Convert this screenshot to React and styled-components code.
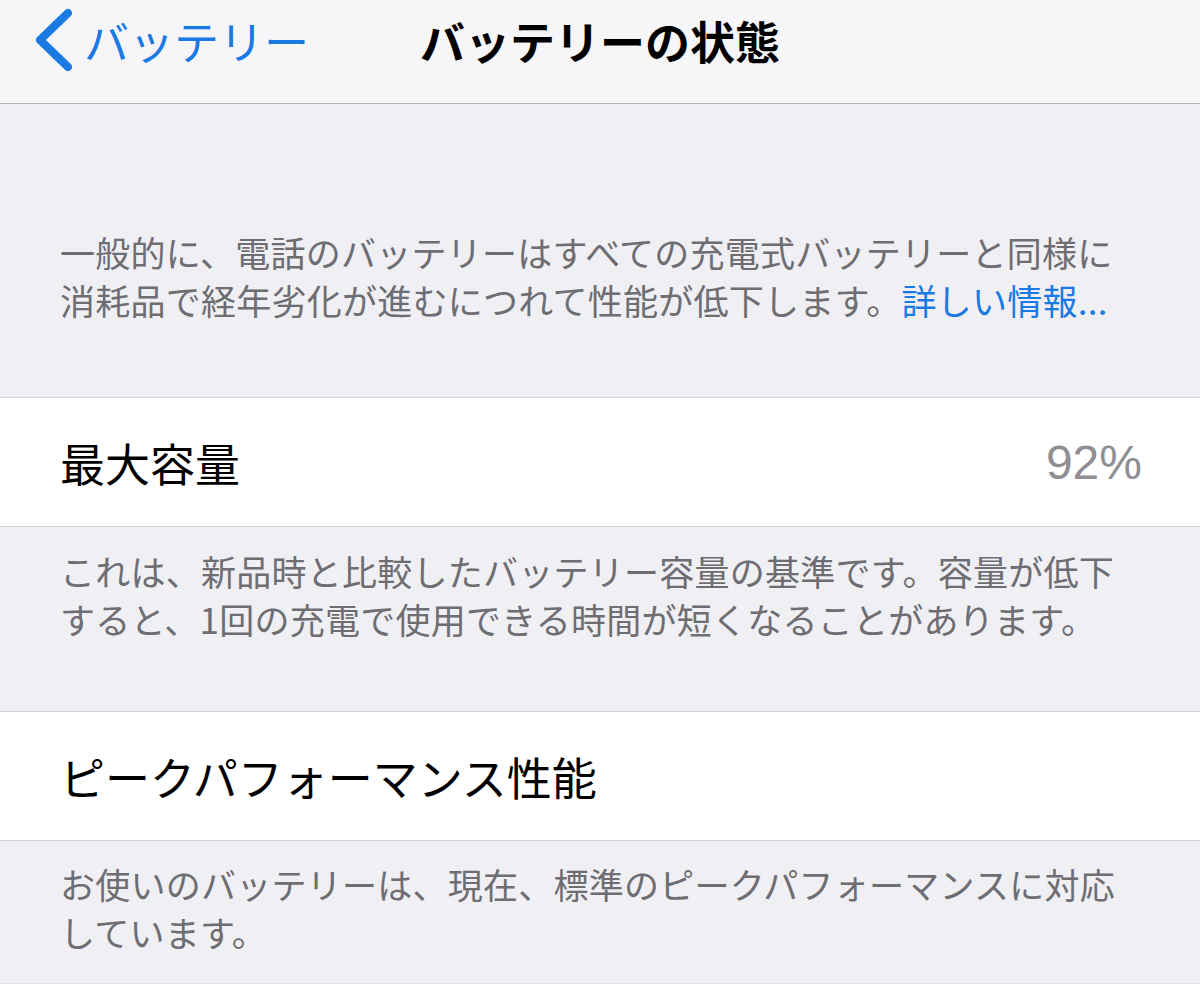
import React from 'react'
import styled, { createGlobalStyle } from 'styled-components'

const GlobalStyle = createGlobalStyle`
  html, body {
    margin: 0;
    padding: 0;
    background: #efeff4;
  }
  body {
    font-family: "Noto Sans CJK JP", "Noto Sans", sans-serif;
    -webkit-font-smoothing: antialiased;
  }
`

const Page = styled.div`
  width: 1200px;
  height: 991px;
  overflow: hidden;
  background: #efeff4;
  display: flex;
  flex-direction: column;
`

const NavBar = styled.div`
  height: 104px;
  flex-shrink: 0;
  box-sizing: border-box;
  background: #f6f6f8;
  border-bottom: 1px solid #b8b8bc;
  display: grid;
  grid-template-columns: 1fr auto 1fr;
  align-items: start;
`

const NavInner = styled.div`
  height: 80px;
  display: flex;
  align-items: center;
`

const BackButton = styled(NavInner)`
  padding-left: 34px;
  gap: 10px;
  color: #1a79e3;
  font-size: 45px;
  line-height: 1;
`

const BackLabel = styled.span`
  letter-spacing: 0;
`

const Title = styled(NavInner)`
  font-size: 45px;
  font-weight: 700;
  color: #000;
  letter-spacing: 0;
`

const Footer = styled.div`
  padding: ${p => p.$top}px 60px ${p => p.$bottom}px 60px;
  font-size: 35px;
  line-height: 48px;
  letter-spacing: 0.25px;
  color: #6d6d72;
`

const Link = styled.span`
  color: #1a79e3;
`

const Cell = styled.div`
  height: 128px;
  flex-shrink: 0;
  background: #fff;
  border-top: 1px solid #d3d3d8;
  border-bottom: 1px solid #d3d3d8;
  display: flex;
  align-items: center;
  justify-content: space-between;
  padding: 0 58px 0 60px;
`

const Label = styled.span`
  font-size: 45px;
  color: #000;
`

const Value = styled.span`
  font-family: "Liberation Sans", "Noto Sans", sans-serif;
  font-size: 48px;
  color: #8e8e93;
`

const TailCell = styled.div`
  flex: 1;
  background: #fff;
  border-top: 1px solid #e3e3e8;
`

function Chevron () {
  return (
    <svg width="40" height="64" viewBox="0 0 40 64">
      <path
        d="M34 5 L6 32 L34 59"
        fill="none"
        stroke="#1a79e3"
        strokeWidth="8"
        strokeLinecap="round"
        strokeLinejoin="round"
      />
    </svg>
  )
}

export default function App () {
  return (
    <>
      <GlobalStyle />
      <Page>
        <NavBar>
          <BackButton>
            <Chevron />
            <BackLabel>バッテリー</BackLabel>
          </BackButton>
          <Title>バッテリーの状態</Title>
          <div />
        </NavBar>

        <Footer $top={124} $bottom={73}>
          一般的に、電話のバッテリーはすべての充電式バッテリーと同様に消耗品で経年劣化が進むにつれて性能が低下します。<Link>詳しい情報...</Link>
        </Footer>

        <Cell>
          <Label>最大容量</Label>
          <Value>92%</Value>
        </Cell>

        <Footer $top={20} $bottom={68}>
          これは、新品時と比較したバッテリー容量の基準です。容量が低下すると、1回の充電で使用できる時間が短くなることがあります。
        </Footer>

        <Cell>
          <Label>ピークパフォーマンス性能</Label>
        </Cell>

        <Footer $top={19} $bottom={27}>
          お使いのバッテリーは、現在、標準のピークパフォーマンスに対応しています。
        </Footer>

        <TailCell />
      </Page>
    </>
  )
}
